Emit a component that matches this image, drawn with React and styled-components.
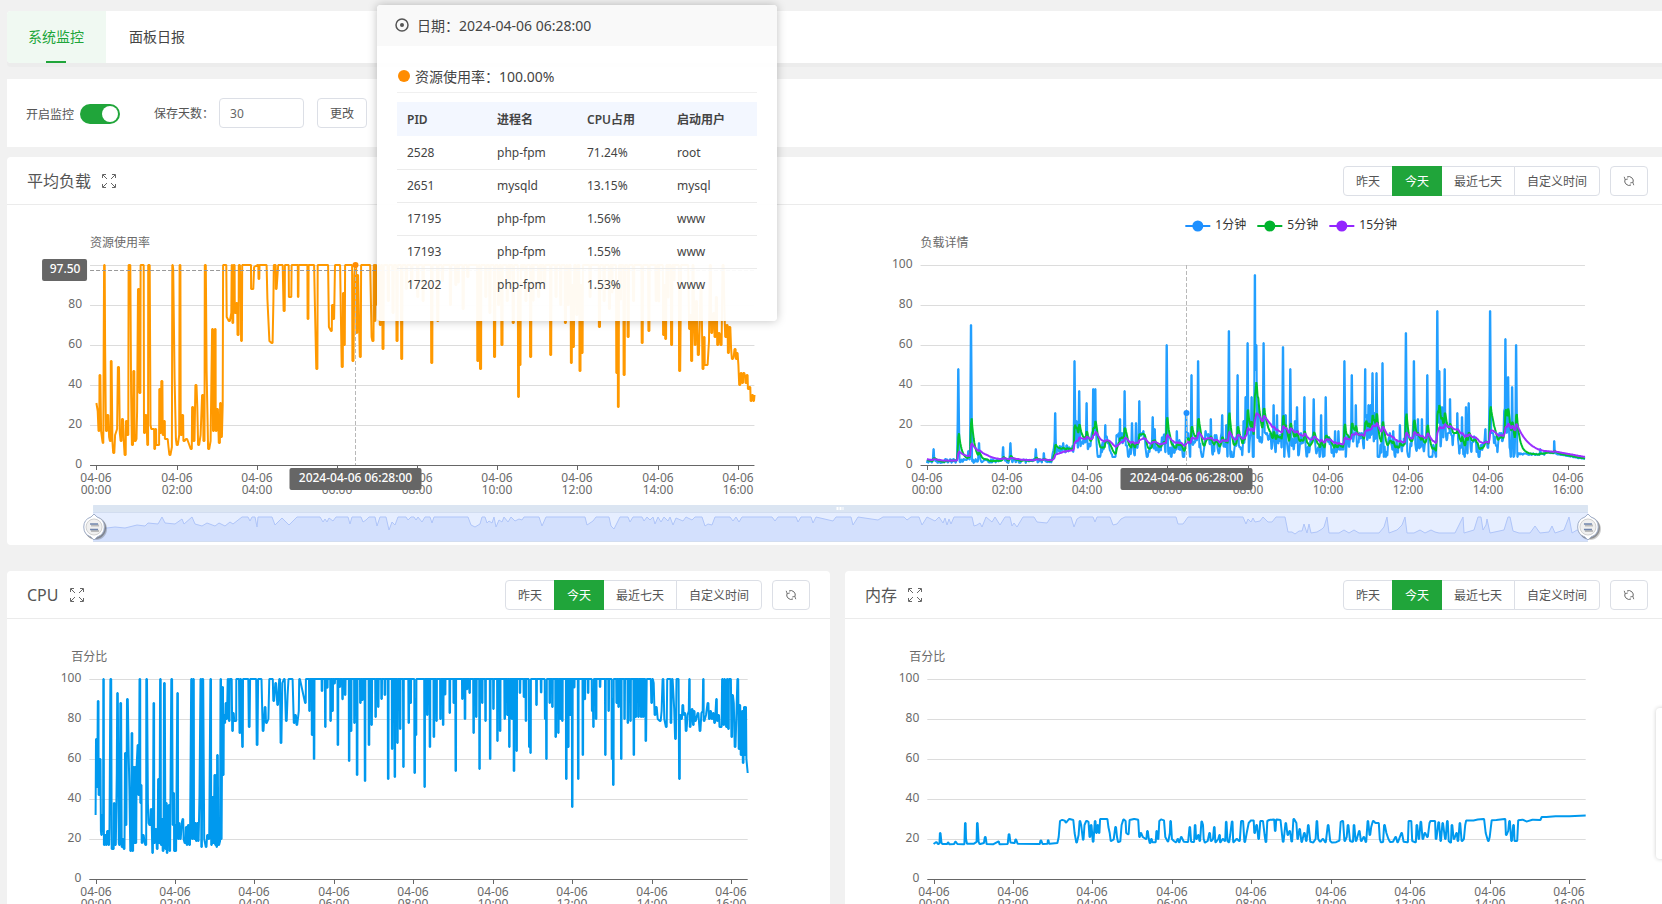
import React, { useLayoutEffect, useRef, useState } from 'react';
import styled, { createGlobalStyle } from 'styled-components';

const GlobalStyle = createGlobalStyle`
  * {
    box-sizing: border-box;
  }

  body {
    margin: 0;
    background: #f1f1f1;
    color: #666;
    font-family: "Noto Sans", "Noto Sans CJK SC", sans-serif;
    font-size: 12px;
  }

  button, input {
    font-family: inherit;
  }
`;

const Page = styled.div`
  height: 100vh;
  overflow: hidden;
  padding: 11px 0 0 7px;
`;

// the content is a bit wider than the window, like in the panel itself
const Content = styled.main`
  margin-right: -6px;
`;

const Tabs = styled.nav`
  display: flex;
  gap: 2px;
  height: 52px;
  background: #fff;
  border-radius: 4px;
  box-shadow: 0 4px 0 #ececec;
`;

const Tab = styled.a`
  display: flex;
  flex-direction: column;
  align-items: center;
  justify-content: center;
  min-width: 99px;
  padding-right: 1px;
  font-size: 14px;
  line-height: 20px;
  text-decoration: none;
  border-radius: 4px 0 0 4px;
  color: ${({ $active }) => ($active ? '#20a53a' : '#444')};
  background: ${({ $active }) => ($active ? '#f0f9f2' : 'transparent')};

  &::after {
    content: "";
    width: 20px;
    height: 2px;
    margin-top: 14px;
    margin-bottom: -16px;
    background: ${({ $active }) => ($active ? '#20a53a' : 'transparent')};
  }
`;

const Settings = styled.section`
  display: flex;
  align-items: center;
  height: 68px;
  margin-top: 16px;
  padding: 0 19px;
  background: #fff;
`;

const SwitchLabel = styled.label`
  display: flex;
  align-items: center;
  gap: 6px;
  margin-right: 34px;
  padding-top: 2px;
  color: #555;
`;

const Switch = styled.input`
  appearance: none;
  display: flex;
  align-items: center;
  justify-content: flex-end;
  width: 40px;
  height: 20px;
  margin: 0;
  padding: 0 2px;
  border-radius: 10px;
  background: #20a53a;
  cursor: pointer;

  &::after {
    content: "";
    width: 16px;
    height: 16px;
    border-radius: 50%;
    background: #fff;
  }

  &:not(:checked) {
    justify-content: flex-start;
    background: #ccc;
  }
`;

const DaysLabel = styled.label`
  display: flex;
  align-items: center;
  gap: 5px;
  color: #555;
`;

const DaysInput = styled.input`
  width: 85px;
  height: 30px;
  padding: 0 10px;
  border: 1px solid #dcdfe6;
  border-radius: 4px;
  color: #666;
  font-size: 12px;
`;

const Button = styled.button`
  height: 30px;
  padding: 0 12px;
  border: 1px solid #dcdfe6;
  border-radius: 4px;
  background: #fff;
  color: #555;
  font-size: 12px;
  cursor: pointer;
`;

const ChangeButton = styled(Button)`
  margin-left: 13px;
`;

const Card = styled.section`
  min-width: 0;
  background: #fff;
  border-radius: 4px;
`;

const LoadCard = styled(Card)`
  margin-top: 10px;
`;

const Columns = styled.div`
  display: grid;
  grid-template-columns: 1fr 1fr;
  gap: 15px;
  margin-top: 26px;
`;

const CardHeader = styled.header`
  display: flex;
  align-items: center;
  height: 48px;
  padding: 0 20px;
  border-bottom: 1px solid #ebebeb;
`;

const Title = styled.h2`
  margin: 0;
  color: #555;
  font-size: 16px;
  font-weight: 400;
  line-height: 24px;
`;

const IconButton = styled.button`
  display: flex;
  margin-left: 10px;
  padding: 0;
  border: 0;
  background: none;
  color: #666;
  cursor: pointer;
`;

const Ranges = styled.div`
  display: flex;
  margin-left: auto;
`;

const RangeButton = styled(Button)`
  border-radius: 0;
  border-color: ${({ $active }) => ($active ? '#20a53a' : '#dcdfe6')};
  background: ${({ $active }) => ($active ? '#20a53a' : '#fff')};
  color: ${({ $active }) => ($active ? '#fff' : '#555')};
  z-index: ${({ $active }) => ($active ? 1 : 0)};

  & + & {
    margin-left: -1px;
  }

  &:first-child {
    border-radius: 4px 0 0 4px;
  }

  &:last-child {
    border-radius: 0 4px 4px 0;
  }
`;

const RefreshButton = styled(Button)`
  display: flex;
  align-items: center;
  justify-content: center;
  width: 38px;
  margin-left: 10px;
  padding: 0;
`;

const ChartBox = styled.div`
  height: 340px;
  overflow: hidden;

  svg {
    display: block;
  }

  text {
    font-size: 12px;
    fill: #6a6a6a;
  }

  .badge {
    fill: #fff;
    font-weight: 500;
  }

  .legend {
    fill: #333;
  }
`;

const Tooltip = styled.div`
  position: absolute;
  top: 5px;
  left: 377px;
  width: 400px;
  border-radius: 4px;
  background: rgba(255, 255, 255, 0.95);
  box-shadow: 0 0 10px rgba(0, 0, 0, 0.25);
  color: #444;
  overflow: hidden;
`;

const TooltipHeader = styled.div`
  display: flex;
  align-items: center;
  gap: 8px;
  height: 41px;
  padding: 0 18px 2px;
  background: #f9f9f9;
  font-size: 14px;
`;

const TooltipBody = styled.div`
  padding: 16px 20px 20px;
`;

const Usage = styled.div`
  display: flex;
  align-items: center;
  gap: 5px;
  height: 31px;
  margin-bottom: 9px;
  padding: 0 0 2px 1px;
  border-bottom: 1px solid #f0f0f0;
  font-size: 14px;

  &::before {
    content: "";
    width: 12px;
    height: 12px;
    border-radius: 50%;
    background: #ff8c00;
  }
`;

const ProcessTable = styled.table`
  width: 100%;
  border-collapse: collapse;
  table-layout: fixed;
  font-size: 12px;
  text-align: left;

  th {
    height: 34px;
    padding: 0 10px;
    background: #f3f7ff;
    font-weight: 600;
  }

  td {
    height: 33px;
    padding: 0 10px;
    border-bottom: 1px solid #ebebeb;
  }

  tr:last-child td {
    border-bottom: 0;
  }
`;

const SideHandle = styled.aside`
  position: fixed;
  top: 708px;
  right: -34px;
  width: 40px;
  height: 151px;
  border-radius: 4px;
  background: #fff;
  box-shadow: 0 0 4px rgba(0, 0, 0, 0.2);
`;

const ExpandIcon = () => (
  <svg width="16" height="16" viewBox="0 0 16 16" fill="none" stroke="currentColor">
    <path d="M1.500 5v-3.500h3.500M11 1.500h3.500v3.500M1.500 11v3.500h3.500M14.500 11v3.500h-3.500" />
    <path d="M2 2l4 4M14 2l-4 4M2 14l4 -4M14 14l-4 -4" />
  </svg>
);

const RefreshIcon = () => (
  <svg width="12" height="12" viewBox="0 0 12 12" fill="none" stroke="#666">
    <path d="M4 2A4.400 4.400 0 0 1 10 7.500M8 10A4.400 4.400 0 0 1 2 4.500" />
    <path d="M1.200 1.800l1 2.800l2.600 -.6M10.800 10.200l-1 -2.800l-2.600 .6" strokeWidth="0.900" />
  </svg>
);

const DateIcon = () => (
  <svg width="14" height="14" viewBox="0 0 14 14">
    <circle cx="7" cy="7" r="6" fill="none" stroke="#555" strokeWidth="1.500" />
    <circle cx="7" cy="7" r="2" fill="#555" />
  </svg>
);

// data

const START = -9.5;
const END = 985;

const parse = (text) => text.trim().split(/\s+/).map((pair) => pair.split(',').map(Number));

const createRandom = (seed) => () => {
  seed = (seed * 16807) % 2147483647;
  return seed / 2147483647;
};

// line that stays at 100 and falls down to every given point
const dips = (text, width, seed, floor) => {
  const random = createRandom(seed);
  const result = [];
  let last = null;
  parse(text).forEach(([time, value]) => {
    if (last !== null) {
      const gap = time - last;
      if (gap > width * 2) {
        result.push([last + width, 100]);
        for (let t = last + width + 2; t < time - width - 2; t += 4) {
          if (random() > 0.6) {
            result.push([t - 1, 100], [t, floor + random() * (98 - floor)], [t + 1, 100]);
          }
        }
        result.push([time - width, 100]);
      } else {
        result.push([last + gap / 2, gap > 3 ? 100 : 90]);
      }
    }
    result.push([time, value]);
    last = time;
  });
  return result;
};

// every turn of the line holds for about a minute
const widen = (data, hold) =>
  data.flatMap((point, index) => {
    const [t, v] = point;
    const before = data[index - 1];
    const after = data[index + 1];
    if (!before || !after || (v - before[1]) * (after[1] - v) > 0) return [point];
    const left = Math.min(hold, (t - before[0]) / 2.5);
    const right = Math.min(hold, (after[0] - t) / 2.5);
    return [[t - left, v], [t + right, v]];
  });

const usage = widen([
  ...parse(`0,31 2,27 4,17 5,45 7,17 9,12 10,11 11,60 12,100 13,60 15,17 17,25 19,14 21,12 22,52 24,12 26,6 28,15
    31,18 33,49 35,16 37,12 39,23 41,12 43,5 45,22 47,15 49,100 50,100 52,36 54,10 56,47 58,12 60,13 61,27 63,88
    65,36 67,100 70,100 72,16 74,25 77,10 78,100 79,100 81,20 83,18 86,18 87,8 89,18 90,10 93,10 95,38 96,16 98,42
    100,15 102,22 103,13 106,13 108,9 110,5 113,9 114,100 115,98 117,43 119,13 121,10 124,15 125,100 127,15 129,25
    131,12 135,13 138,11 142,8 144,29 146,12 149,40 151,29 153,10 156,15 159,35 161,12 163,100 165,47 168,8 171,12
    174,68 175,17 178,68 179,17 181,28 184,11 186,31 187,14 189,30 190,100 194,100 195,74 199,72 202,76 203,100
    204,71 206,100 208,76 210,81 212,65 214,100 216,85 217,62 219,100 231,100 232,88 234,88 236,99 242,100 243,93
    245,100 254,100 256,83 259,62 263,61 265,82 266,100 268,100 269,88 273,100 278,100 281,77 283,100 287,100 289,84
    291,84 293,100 301,100 302,84 303,100 315,100 317,73 318,100 325,100 327,80 330,48 332,100 346,100 348,69 352,67
    353,80 355,73 358,100 364,100 368,49 370,86 371,60 373,100 382,100 384,52 386,95 388,100 390,66 391,95 395,54
    397,100 409,100 412,64 414,62 416,100 417,72 418,100`),
  ...dips(
    `421,80 425,70 429,58 437,82 444,76 450,62 457,53 464,88 472,90 481,84 489,82 502,51 511,72 518,92 530,80 538,90
    549,78 556,94 571,52 575,48 583,84 589,76 596,54 602,80 607,60 615,82 624,71 632,34 634,50 643,82 650,54 662,84
    671,88 680,55 688,84 695,80 702,71 706,80 711,51 714,59 719,75 724,47 727,56 739,84 753,69 760,82 768,78 779,46
    781,29 790,45 796,64 804,82 817,61 827,67 838,82 849,65 852,63 861,60 873,47`,
    2,
    77,
    80
  ),
  ...parse(`876,100 885,100 888,68 889,75 891,52 893,100 895,66 896,60 898,82 901,55 903,69 905,90 908,48 910,64
    911,50 914,50 917,62 919,100 921,66 924,76 926,64 928,84 930,60 932,66 935,60 938,100 940,78 942,64 944,70 946,56
    948,69 950,58 952,53 954,54 956,58 958,53 959,56 961,50 963,40 965,46 967,41 969,46 971,44 972,41 974,45 976,38
    978,39 980,32 982,35 984,32 985,35`),
], 0.8);

const cpu = widen([
  ...parse(`0,32 1,70 2,46 4,89 5,42 7,60 8,24 9,22 10,32 11,24 12,100 13,17 15,22 16,17 18,24 20,17 21,26 23,100
    25,15 27,15 28,38 30,17 32,53 33,93 35,18 36,17 38,88 40,16 41,20 43,15 45,63 46,27 48,90 50,62 51,45 53,14 55,73
    56,14 58,56 59,18 60,56 61,18 62,56 64,67 65,42 67,100 68,38 69,47 70,18 72,22 74,18 76,17 77,100 79,38 80,28
    82,27 84,35 85,24 86,13 88,88 89,18 91,25 93,15 95,50 96,18 98,100 99,17 100,30 102,14 104,98 106,15 107,38
    108,13 109,33 111,37 112,14 115,100 117,27 118,43 119,14 120,27 121,14 124,93 125,20 126,28 128,20 130,28 132,30
    133,20 135,18 137,26 138,17 140,27 142,17 145,100 146,20 148,100 149,20 151,28 152,19 154,28 155,19 157,42 159,100
    160,16 162,100 164,20 167,16 169,22 171,20 174,100 175,17 177,41 178,18 180,52 181,17 182,52 183,16 184,62 186,17
    188,19 189,100 190,20 191,60 192,96 193,52 194,82 195,78 197,88 198,80 199,88 200,100 202,79 203,100 205,100
    207,74 208,83 210,79 212,79 213,100 216,100 218,73 219,100 222,66 223,100 230,100 232,76 234,100 242,100 244,67
    246,100 250,100 253,74 256,86 258,78 261,80 263,100 267,100 269,89 272,98 275,87 278,100 280,68 282,98 285,100
    288,79 290,92 292,100 297,100 300,78 302,82 304,77 307,84 308,100`),
  ...dips(
    `317,88 323,84 327,72 330,60 342,94 347,76 355,79 358,84 366,67 377,92 383,59 386,74 391,78 395,52 400,88 407,49
    413,67 417,77 423,81 427,86 432,90 437,92 442,50 448,65 452,51 456,68 460,75 465,56 473,78 476,88 482,53 484,72
    497,46 501,82 505,66 511,71 515,79 521,80 525,77 535,83 541,88 544,54 554,90 558,80 565,93 571,73 575,81 580,55
    584,88 589,79 596,60 601,85 607,69 611,74 618,80 622,82 625,66 629,80 632,54 636,64 641,93 647,91 650,79 655,66
    657,63 666,87 679,80 681,60 686,88 690,86 695,71 699,73 702,80 705,79 711,50 714,66 717,82 720,36 729,50 736,62
    744,93 750,84 752,76 756,80 762,96 770,62 775,84 780,60 782,47 787,88 790,86 794,60 799,80 804,78 808,79 813,62
    816,81 820,81 824,81 827,81 831,69`,
    1,
    41,
    86
  ),
  ...parse(`833,100 838,100 840,88 841,100 843,98 845,82 847,86 849,80 853,79 855,84 857,100 859,80 862,76 864,100
    868,100 869,78 871,100 874,85 876,70 878,100 880,100 882,50 883,82 885,80 887,87 889,82 890,83 892,74 894,82
    896,84 897,100 898,76 901,85 903,77 904,84 906,79 908,81 910,83 913,74 915,83 917,84 918,100 919,79 922,82 925,88
    927,80 929,84 931,80 933,83 935,78 938,90 939,79 941,82 943,76 945,76 947,100 949,77 950,100 953,76 954,100
    956,75 957,100 959,100 961,71 962,92 964,88 966,66 968,82 970,100 972,65 973,87 975,62 977,84 978,58 980,86
    981,62 982,86 983,60 985,53`),
], 0.6);

const memory = widen(parse(`0,17.5 2,18 4,18.4 7,17.5 9,18 10,23 12,18 14,17.5 20,17.5 22,18.2 24,17.4 31,17.5 33,18.6
  36,17.5 46,17.4 48,28 49,20 51,17.6 60,17.6 65,18.6 66,28 68,18.6 70,17.5 76,18 78,21 80,17.5 90,17.4 98,18.7
  100,17.4 112,17.5 114,22.4 116,18.3 122,18 124,19.8 127,17.6 160,17.5 162,19.3 165,17.5 172,17.6 173,19.4 175,17.6
  187,18 189,21 191,29 194,29.5 198,29.2 200,28.3 205,30 211,29.5 213,23 216,18.2 219,22 221,29 223,27 226,19.6 228,27
  231,29 234,28.6 236,21 238,27 241,18.6 244,29 246,23 248,27 250,23 252,30 262,30 264,26 266,23 268,19 272,19.8
  275,26 277,21 279,18.5 282,18.8 284,27 287,29.7 290,29 291,23 294,22.4 296,29.5 303,30 309,29.6 311,21 313,23 316,21
  321,20 323,24 325,20 327,18 329,20 331,18.4 335,18.4 337,24 339,20 341,29 344,29.7 348,29.3 350,21 354,18.8 357,23
  358,29 360,20 363,19 366,18.4 369,20 371,18.4 374,21 378,18.6 384,18.5 387,26 389,18.6 393,18.5 395,27 397,20 400,22
  402,19 405,28.7 407,27 408,20 410,18.3 414,19 417,23 419,19 422,20 424,26 426,18.4 430,20 432,22 433,18.4 437,20
  440,19 442,28.6 444,19 446,18.4 448,22 451,28.7 453,18.4 458,20 462,19 465,29 467,29 470,18.5 473,23 476,28
  479,29.2 483,29.3 485,23 488,27 491,20 494,29 497,29 500,22 502,18.5 504,29 507,29.5 514,29.8 516,24 518,29.7
  524,29.5 528,18.6 532,28 535,22 538,24 541,18.7 544,30 548,28 550,20 553,25 556,18.5 560,23 563,19 566,27 569,18.6
  573,18.3 577,20 579,29 581,20 584,18.7 588,20 592,18.4 596,27 599,19 602,18.3 608,18.4 613,19.2 615,28.6 618,29
  621,19 624,21 626,27 629,19 633,18.6 635,27 638,19 643,24 646,19 650,21 653,18.5 656,29 659,22 661,26 664,29
  668,28 672,28 674,20 676,18.4 679,18.5 681,27 684,23 687,20 690,18.5 694,18.6 698,21 701,18.4 707,23 710,18.6
  716,18.4 718,29 721,29 723,19 728,18.4 730,27 733,20 736,28.6 739,20 742,23 746,21 749,28 751,29 757,29 759,20
  763,28.4 766,19 769,28 773,20 776,29 778,19 781,18.2 783,27 786,20 790,23 792,19 795,28 798,19 801,20 803,27
  805,29.3 815,29.3 822,29.7 831,30 834,23 838,19 840,21 843,29.4 850,29.5 863,30 865,22 868,24 870,29 873,19
  876,27 878,19 881,19 883,29.4 890,29.6 896,28.8 905,29.6 916,29.5 919,31 925,31 940,31.4 960,31.4 985,31.7`), 0.5);

const loadSpikes = parse(`10,8 47,48 62,7 66,70 78,11 114,9 125,11 163,8 175,6 192,26 204,11 221,52 224,22 228,37
  239,31 249,38 252,38 267,20 284,15 289,23 296,37 307,21 313,21 318,32 324,17 338,24 341,18 359,60 374,17 388,26
  396,45 406,52 417,17 425,23 431,15 442,25 448,20 452,67 465,45 474,22 477,34 480,61 486,34 491,95 493,60 496,30
  504,61 519,30 524,25 533,59 537,25 544,48 551,22 554,29 565,34 579,33 590,25 597,34 611,17 616,17 625,52 636,45
  642,30 656,48 658,25 661,30 664,30 667,46 670,26 673,46 682,51 698,17 708,20 717,66 729,52 735,23 741,23 749,45
  764,77 767,47 771,29 775,48 783,33 794,26 801,24 807,29 811,31 836,18 843,77 864,27 866,63 870,44 876,39 882,60
  918,8 939,12`);

const buildLoad = () => {
  const random = createRandom(12);
  const one = [];
  let level = 8;
  for (let t = 0; t <= END; t += 1) {
    let value;
    if (t < 188) value = 1 + random() * 2;
    else if (t < 220) value = 5.5 + random() * 4.5;
    else if (t < 885) {
      // random walk between 4 and 16
      level += (random() - 0.5) * 9 + (9 - level) * 0.2;
      level = Math.min(16, Math.max(4, level));
      value = level;
    } else if (t < 925) value = 5 + random();
    else value = 6.4 - (t - 925) * 0.06 + random() * 0.4;
    one.push(value);
  }
  loadSpikes.forEach(([t, value]) => {
    one[t] = value;
    one[t - 1] = Math.max(one[t - 1], value * 0.45);
    one[t + 1] = Math.max(one[t + 1], value * 0.5);
  });
  const average = (step) => {
    let current = 3;
    return one.map((value) => {
      current += (value - current) * step;
      return current;
    });
  };
  const toPoints = (list) => list.map((value, t) => [t, value]);
  return [widen(toPoints(one), 0.3), toPoints(average(0.19)), toPoints(average(0.055))];
};

const [loadOne, loadFive, loadFifteen] = buildLoad();

const zoomLine = parse(`0,22 4,23 14,23 22,22 32,23 44,20 52,21 55,18 65,19 69,12 72,18 82,19 89,14 91,19 99,12 102,19
  109,21 114,18 122,21 126,18 132,21 137,17 140,19 149,12 155,12 157,16 159,12 162,12 164,22 165,12 179,12 182,20
  189,13 196,20 204,12 227,12 230,17 232,14 234,17 236,13 240,16 243,12 255,12 257,19 259,12 268,12 270,17 273,15
  276,12 282,12 284,21 287,12 293,12 296,25 299,17 302,20 305,12 313,12 315,15 318,12 321,12 323,15 325,12 329,17
  332,12 337,12 339,18 341,12 375,12 378,20 382,22 387,19 389,12 392,12 394,18 396,16 399,18 401,12 403,22 406,15
  409,17 411,12 415,17 418,12 422,16 426,14 429,15 431,12 446,12 449,21 453,12 492,12 494,20 500,16 503,12 516,12
  518,21 521,24 527,12 535,12 537,17 540,12 549,12 551,16 554,12 557,15 560,12 562,19 565,12 568,17 571,12 575,16
  577,12 580,20 583,13 590,16 593,12 599,15 602,12 609,12 612,21 615,19 619,20 622,12 637,12 640,16 643,12 646,17
  649,12 679,12 682,16 685,12 703,12 705,17 708,12 718,12 720,18 723,12 740,16 743,12 758,12 760,20 765,12 785,15
  790,12 811,12 814,15 818,12 826,12 829,20 834,12 842,16 846,12 850,18 852,13 854,20 856,14 858,19 861,12 879,12
  881,21 884,20 887,18 889,22 893,12 899,17 902,12 907,20 912,12 917,12 919,21 921,18 924,22 930,12 941,12 944,17
  954,18 958,12 978,12 981,22 984,14 987,12 1000,12 1002,17 1004,12 1017,12 1020,20 1024,19 1028,14 1032,12 1083,12
  1085,19 1090,19 1095,12 1150,12 1153,19 1155,14 1158,17 1160,13 1162,17 1167,16 1170,12 1175,17 1179,17 1183,12
  1192,12 1195,27 1199,27 1202,29 1206,26 1209,26 1211,19 1214,28 1216,19 1218,28 1224,27 1229,24 1231,22 1234,12
  1236,28 1246,28 1251,25 1256,28 1261,25 1266,28 1286,28 1291,22 1294,12 1296,28 1304,25 1309,20 1312,12 1314,28
  1321,28 1327,25 1332,28 1338,25 1342,27 1346,28 1362,28 1367,18 1370,12 1371,28 1381,25 1385,12 1388,12 1390,25
  1393,20 1394,14 1397,28 1411,25 1415,12 1417,12 1420,26 1426,28 1437,28 1442,21 1447,28 1456,27 1459,21 1462,28
  1471,25 1476,12 1479,28 1484,25 1489,27 1495,27`);

const HOURS = ['00', '02', '04', '06', '08', '10', '12', '14', '16'];
const TOP = 60;
const BOTTOM = 260;

const timeToX = (left, width, t) => left + ((t - START) / (END - START)) * width;

const Line = ({ data, left, width, color }) => (
  <polyline
    points={data.map(([t, v]) => `${timeToX(left, width, t).toFixed(1)},${(BOTTOM - v * 2).toFixed(1)}`).join(' ')}
    fill="none"
    stroke={color}
    strokeWidth="2"
    strokeLinejoin="bevel"
  />
);

const Axes = ({ left, width, name, centered, values = [0, 20, 40, 60, 80, 100] }) => (
  <g>
    <text x={left} y={TOP - 18} textAnchor={centered ? 'middle' : 'start'}>{name}</text>
    {[0, 20, 40, 60, 80, 100].map((value) => {
      const y = BOTTOM - value * 2 + 0.5;
      return <line key={value} x1={left} x2={left + width} y1={y} y2={y} stroke={value ? '#dcdcdc' : '#666'} />;
    })}
    {values.map((value) => (
      <text key={value} x={left - 8} y={BOTTOM - value * 2 + 3} textAnchor="end">{value}</text>
    ))}
    {HOURS.map((hour) => {
      const x = Math.round(timeToX(left, width, Number(hour) * 60));
      return (
        <g key={hour}>
          <line x1={x + 0.5} x2={x + 0.5} y1={BOTTOM} y2={BOTTOM + 5} stroke="#666" />
          <text x={x} y={BOTTOM + 17} textAnchor="middle">04-06</text>
          <text x={x} y={BOTTOM + 29} textAnchor="middle">{hour}:00</text>
        </g>
      );
    })}
  </g>
);

const Pointer = ({ left, width, value, color }) => {
  const x = Math.floor(timeToX(left, width, 388)) + 0.5;
  return (
    <g>
      <line x1={x} x2={x} y1={TOP} y2={BOTTOM} stroke="#b8b8b8" strokeDasharray="4 2" />
      <circle cx={x} cy={BOTTOM - value * 2} r="3" fill={color} />
      <rect x={x - 66} y={BOTTOM + 3} width="132" height="22" rx="2" fill="#666" />
      <text className="badge" x={x} y={BOTTOM + 17} textAnchor="middle">2024-04-06 06:28:00</text>
    </g>
  );
};

const ZoomHandle = ({ x }) => (
  <g transform={`translate(${x} 322)`}>
    <circle cx="2" cy="2" r="11" fill="#000" opacity="0.2" />
    <circle cx="1" cy="1" r="11" fill="#666" opacity="0.6" />
    <path d="M0 -13l3 3a10.500 10.500 0 0 1 0 20l-3 3l-3 -3a10.500 10.500 0 0 1 0 -20z" fill="#fff" stroke="#9fadc8" />
    <circle r="8" fill="#f0f0f0" stroke="#d0d0d0" />
    <path d="M-3 -1.500h8M-3 4h8" stroke="#bbb" strokeWidth="2" />
    <path d="M-4 -3h8M-4 2.500h8" stroke="#7286ad" strokeWidth="1.500" />
  </g>
);

const useWidth = (initial) => {
  const ref = useRef(null);
  const [width, setWidth] = useState(initial);

  useLayoutEffect(() => {
    const update = () => setWidth(ref.current.clientWidth);
    update();
    const observer = new ResizeObserver(update);
    observer.observe(ref.current);
    return () => observer.disconnect();
  }, []);

  return [ref, width];
};

const LEGEND = [
  { name: '1分钟', color: '#1e90ff' },
  { name: '5分钟', color: '#00b32d' },
  { name: '15分钟', color: '#9326ff' },
];

const LoadChart = () => {
  const [ref, width] = useWidth(1600);
  const plot = width * 0.4;
  const left = width * 0.05;
  const right = width * 0.55;
  const zoomLeft = left + 3;
  const zoomWidth = width * 0.9;
  const zoomPoints = zoomLine.map(([x, y]) => `${((x / 1495) * zoomWidth + zoomLeft).toFixed(1)},${300 + y}`).join(' ');

  return (
    <ChartBox ref={ref}>
      <svg width={width} height="340">
        {/* the top value is under the pointer badge */}
        <Axes left={left} width={plot} name="资源使用率" values={[0, 20, 40, 60, 80]} />
        <Line data={usage} left={left} width={plot} color="#ff9900" />
        <line x1={left} x2={left + plot} y1="65.5" y2="65.5" stroke="#999" strokeDasharray="4 2" />
        <Pointer left={left} width={plot} value={100} color="#ff8c00" />
        <rect x={left - 48} y="54" width="45" height="22" rx="2" fill="#666" />
        <text className="badge" x={left - 25} y="68" textAnchor="middle">97.50</text>

        <Axes left={right} width={plot} name="负载详情" />
        <Line data={loadOne} left={right} width={plot} color="#229fff" />
        <Line data={loadFive} left={right} width={plot} color="#00c22f" />
        <Line data={loadFifteen} left={right} width={plot} color="#9b30ff" />
        <Pointer left={right} width={plot} value={26} color="#1e90ff" />
        {LEGEND.map(({ name, color }, index) => {
          const x = width * 0.71 + index * 72 - 1;
          return (
            <g key={name}>
              <path d={`M${x} 21h25`} stroke={color} strokeWidth="2" />
              <circle cx={x + 12.5} cy="21" r="5.5" fill={color} />
              <text className="legend" x={x + 30} y="24">{name}</text>
            </g>
          );
        })}

        <rect x={zoomLeft} y="300" width={zoomWidth} height="36" fill="#e6eeff" />
        <polygon points={`${zoomLeft},336 ${zoomPoints} ${zoomLeft + zoomWidth},336`} fill="#d3e0fd" />
        <polyline points={zoomPoints} fill="none" stroke="#afc5f9" />
        <rect x={zoomLeft} y="300" width={zoomWidth} height="7" rx="1" fill="#dbe5f2" />
        <path d={`M${zoomLeft} 307.500h${zoomWidth}M${zoomLeft} 336.500h${zoomWidth}`} stroke="#d2ddf0" />
        <path d={`M${zoomLeft + zoomWidth / 2 - 4} 303.500h7`} stroke="#fff" strokeWidth="3" strokeDasharray="2 1" />
        <ZoomHandle x={zoomLeft + 1} />
        <ZoomHandle x={zoomLeft + zoomWidth} />
      </svg>
    </ChartBox>
  );
};

const PercentChart = ({ data }) => {
  const [ref, width] = useWidth(800);

  return (
    <ChartBox ref={ref}>
      <svg width={width} height="340">
        <Axes left={width * 0.1} width={width * 0.8} name="百分比" centered />
        <Line data={data} left={width * 0.1} width={width * 0.8} color="#0099ee" />
      </svg>
    </ChartBox>
  );
};

const RANGES = ['昨天', '今天', '最近七天', '自定义时间'];

const ChartHeader = ({ title }) => {
  const [range, setRange] = useState('今天');

  return (
    <CardHeader>
      <Title>{title}</Title>
      <IconButton aria-label="全屏">
        <ExpandIcon />
      </IconButton>
      <Ranges>
        {RANGES.map((item) => (
          <RangeButton key={item} $active={item === range} onClick={() => setRange(item)}>
            {item}
          </RangeButton>
        ))}
      </Ranges>
      <RefreshButton aria-label="刷新">
        <RefreshIcon />
      </RefreshButton>
    </CardHeader>
  );
};

const PROCESSES = [
  ['2528', 'php-fpm', '71.24%', 'root'],
  ['2651', 'mysqld', '13.15%', 'mysql'],
  ['17195', 'php-fpm', '1.56%', 'www'],
  ['17193', 'php-fpm', '1.55%', 'www'],
  ['17202', 'php-fpm', '1.53%', 'www'],
];

const ProcessTooltip = () => (
  <Tooltip>
    <TooltipHeader>
      <DateIcon />
      <span>日期：2024-04-06 06:28:00</span>
    </TooltipHeader>
    <TooltipBody>
      <Usage>资源使用率：100.00%</Usage>
      <ProcessTable>
        <thead>
          <tr>
            <th>PID</th>
            <th>进程名</th>
            <th>CPU占用</th>
            <th>启动用户</th>
          </tr>
        </thead>
        <tbody>
          {PROCESSES.map((row) => (
            <tr key={row[0]}>
              {row.map((cell) => (
                <td key={cell}>{cell}</td>
              ))}
            </tr>
          ))}
        </tbody>
      </ProcessTable>
    </TooltipBody>
  </Tooltip>
);

const App = () => {
  const [enabled, setEnabled] = useState(true);
  const [days, setDays] = useState('30');

  return (
    <Page>
      <GlobalStyle />
      <Content>
        <Tabs>
          <Tab href="#monitor" $active>系统监控</Tab>
          <Tab href="#daily">面板日报</Tab>
        </Tabs>

        <Settings>
          <SwitchLabel>
            开启监控
            <Switch type="checkbox" checked={enabled} onChange={(e) => setEnabled(e.target.checked)} />
          </SwitchLabel>
          <DaysLabel>
            保存天数：
            <DaysInput value={days} onChange={(e) => setDays(e.target.value)} />
          </DaysLabel>
          <ChangeButton>更改</ChangeButton>
        </Settings>

        <LoadCard>
          <ChartHeader title="平均负载" />
          <LoadChart />
        </LoadCard>

        <Columns>
          <Card>
            <ChartHeader title="CPU" />
            <PercentChart data={cpu} />
          </Card>
          <Card>
            <ChartHeader title="内存" />
            <PercentChart data={memory} />
          </Card>
        </Columns>
      </Content>
      <ProcessTooltip />
      <SideHandle />
    </Page>
  );
};

export default App;
